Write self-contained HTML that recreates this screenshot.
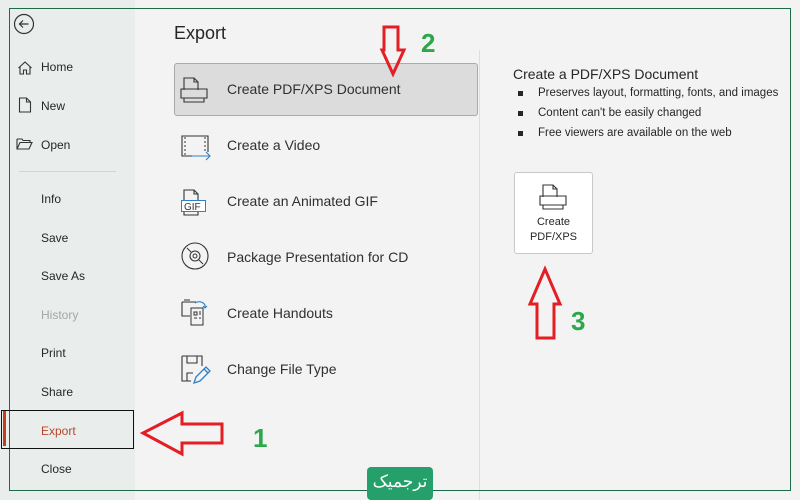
<!DOCTYPE html>
<html><head><meta charset="utf-8"><style>
*{margin:0;padding:0;box-sizing:border-box}
body{width:800px;height:500px;background:#fff;font-family:"Liberation Sans",sans-serif;position:relative;overflow:hidden;color:#262626}
.side{position:absolute;left:0;top:0;width:135px;height:500px;background:#e9eeed}
.main{position:absolute;left:135px;top:0;width:665px;height:500px;background:#f3f3f3}
.frame{position:absolute;left:9px;top:8px;width:782px;height:483px;border:1px solid #1e6b4a}
.ni{position:absolute;left:41px;font-size:12px;color:#262626}
.t{position:absolute;font-size:14px;color:#303030}
.ic{position:absolute}
ul{position:absolute;left:518px;top:87px;list-style:none;font-size:11.5px;color:#262626}
ul li{height:20px;position:relative;padding-left:20px}
ul li:before{content:"";position:absolute;left:0;top:4px;width:5px;height:5px;background:#262626}
</style></head><body>
<div class="side"></div>
<div class="main"></div>
<div style="position:absolute;left:479px;top:50px;width:1px;height:450px;background:#dedede"></div>
<div class="frame"></div>
<svg class="ic" style="left:13px;top:13px" width="22" height="22"><circle cx="11" cy="11" r="9.5" fill="none" stroke="#333" stroke-width="1.2"/><path d="M15.5 11H6.5M10 7.5L6.5 11 10 14.5" fill="none" stroke="#333" stroke-width="1.2"/></svg>
<svg class="ic" style="left:17px;top:60px" width="16" height="16"><path d="M1.5 8L8 2l6.5 6M3 7v7h3.5v-4h3v4H13V7" fill="none" stroke="#333" stroke-width="1.1"/></svg>
<div class="ni" style="top:60px">Home</div>
<svg class="ic" style="left:18px;top:97px" width="14" height="16"><path d="M1.5 1h7l4 4v10h-11z M8.5 1v4h4" fill="none" stroke="#333" stroke-width="1.1"/></svg>
<div class="ni" style="top:99px">New</div>
<svg class="ic" style="left:16px;top:137px" width="18" height="14"><path d="M1 2h5l1 1.5h7v2M1 2v10h12l3-6.5H4L1 12" fill="none" stroke="#333" stroke-width="1.1"/></svg>
<div class="ni" style="top:138px">Open</div>
<div style="position:absolute;left:19px;top:171px;width:97px;height:1px;background:#d0d4d4"></div>
<div class="ni" style="top:192px">Info</div>
<div class="ni" style="top:231px">Save</div>
<div class="ni" style="top:269px">Save As</div>
<div class="ni" style="top:308px;color:#a5a5a5">History</div>
<div class="ni" style="top:346px">Print</div>
<div class="ni" style="top:385px">Share</div>
<div style="position:absolute;left:3px;top:411px;width:3px;height:35px;background:#c43e1c"></div>
<div style="position:absolute;left:1px;top:410px;width:133px;height:39px;border:1.5px solid #111"></div>
<div class="ni" style="top:424px;color:#b5472a">Export</div>
<div class="ni" style="top:462px">Close</div>

<div style="position:absolute;left:174px;top:23px;font-size:18px;color:#262626">Export</div>
<div style="position:absolute;left:174px;top:63px;width:304px;height:53px;background:#dcdcdc;border:1px solid #aaa;border-radius:3px"></div>
<svg class="ic" style="left:180px;top:76px" width="30" height="28"><path d="M4 14V2h10l4 4v8 M14 2v4h4 M1 13h26v9H1z M4 22v4h20v-4" fill="none" stroke="#333" stroke-width="1.1"/></svg>
<div class="t" style="left:227px;top:81px">Create PDF/XPS Document</div>
<svg class="ic" style="left:180px;top:134px" width="34" height="28"><path d="M2 2h26v20H2z" fill="none" stroke="#333" stroke-width="1.1"/><path d="M5 3v18M25 3v18" stroke="#333" stroke-dasharray="2 2"/><rect x="14" y="18" width="16" height="7" fill="#f3f3f3"/><path d="M12 22h18M26 18l4 4-4 4" fill="none" stroke="#2e80c8" stroke-width="1.1"/></svg>
<div class="t" style="left:227px;top:137px">Create a Video</div>
<svg class="ic" style="left:181px;top:188px" width="30" height="28"><path d="M3 14V2h10l4 4v8 M13 2v4h4 M3 24v3h14v-3" fill="none" stroke="#333" stroke-width="1.1"/><rect x="0.5" y="12.5" width="24" height="11" fill="#fff" stroke="#2e80c8"/><text x="3" y="22" font-size="10" fill="#333" font-family="Liberation Sans">GIF</text></svg>
<div class="t" style="left:227px;top:193px">Create an Animated GIF</div>
<svg class="ic" style="left:181px;top:242px" width="30" height="30"><circle cx="14" cy="14" r="13" fill="none" stroke="#333" stroke-width="1.1"/><circle cx="14" cy="14" r="5" fill="none" stroke="#333" stroke-width="1.1"/><circle cx="14" cy="14" r="2" fill="none" stroke="#333"/><path d="M6 6l4 4M22 22l-4-4" stroke="#333"/></svg>
<div class="t" style="left:227px;top:249px">Package Presentation for CD</div>
<svg class="ic" style="left:181px;top:298px" width="32" height="32"><path d="M1 4h14 M1 4v14h8 M3 2h6" fill="none" stroke="#333" stroke-width="1.1"/><rect x="10" y="10" width="12" height="17" fill="#f3f3f3" stroke="#333"/><path d="M13 14h3v3h-3zM13 20h3M18 14h2M18 16h2M18 20h2" stroke="#333" fill="none"/><path d="M14 5a7 7 0 0 1 10 2l0 3M22 8l2 2 2-2" fill="none" stroke="#2e80c8" stroke-width="1.1"/></svg>
<div class="t" style="left:227px;top:305px">Create Handouts</div>
<svg class="ic" style="left:181px;top:355px" width="32" height="32"><path d="M1 1h20v10M1 1v25h9 M6 1v7h10V1 M6 26v-8h6" fill="none" stroke="#333" stroke-width="1.1"/><path d="M13 28l2-6 10-10 4 4-10 10z M23 14l4 4" fill="none" stroke="#2e80c8" stroke-width="1.3"/></svg>
<div class="t" style="left:227px;top:361px">Change File Type</div>

<div style="position:absolute;left:513px;top:66px;font-size:14px;color:#262626">Create a PDF/XPS Document</div>
<ul><li>Preserves layout, formatting, fonts, and images</li><li>Content can't be easily changed</li><li>Free viewers are available on the web</li></ul>
<div style="position:absolute;left:514px;top:172px;width:79px;height:82px;background:#fff;border:1px solid #c8c8c8;border-radius:3px"></div>
<svg class="ic" style="left:539px;top:183px" width="28" height="28"><path d="M4 14V2h10l4 4v8 M14 2v4h4 M1 13h26v9H1z M4 22v4h20v-4" fill="none" stroke="#333" stroke-width="1.1"/></svg>
<div style="position:absolute;left:514px;top:215px;width:79px;text-align:center;font-size:11px;line-height:15px;color:#262626">Create<br>PDF/XPS</div>

<svg class="ic" style="left:0;top:0" width="800" height="500">
<g fill="none" stroke="#e31e24" stroke-width="3" stroke-linejoin="miter">
<path d="M384 27h14v23h6l-11 24-11-24h2z"/>
<path d="M537 338v-34h-7l15-35 15 35h-6v34z"/>
<path d="M222 424v19h-40v11l-39-21 39-20v11z"/>
</g>
<g fill="#2aa84a" font-family="Liberation Sans" font-weight="bold" font-size="26">
<text x="421" y="52">2</text><text x="571" y="330">3</text><text x="253" y="447">1</text>
</g>
</svg>
<div style="position:absolute;left:367px;top:467px;width:66px;height:33px;background:#25a06b;border-radius:4px;color:#fff;font-family:'Liberation Sans','Noto Sans CJK SC',sans-serif;font-size:17px;text-align:center;line-height:30px" dir="rtl">ترجمیک</div>
</body></html>
